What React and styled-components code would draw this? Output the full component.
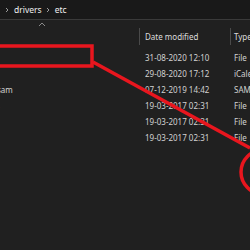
import React from 'react';
import styled, { createGlobalStyle } from "styled-components"

const Global = createGlobalStyle`
    html, body {
        margin: 0;
        padding: 0;
        background: #202020;
    }
    body {
        font-family: "Noto Sans", "Liberation Sans", sans-serif;
    }
`;

const Window = styled.div`
    position: relative;
    width: 250px;
    height: 250px;
    overflow: hidden;
    background: #202020;
`;

const AddressBar = styled.div`
    display: flex;
    align-items: center;
    height: 20px;
    background: #191919;
    border-bottom: 1px solid #3a3a3a;
    box-sizing: border-box;
    padding-left: 1px;
    color: #f0f0f0;
    font-size: 8.5px;
`;

const Crumb = styled.span`
    line-height: 20px;
`;

const Chevron = styled.svg`
    width: 8px;
    height: 8px;
    margin: 0 3px 0 2px;
`;

const SortRow = styled.div`
    height: 8px;
    padding-left: 38px;
    display: flex;
    align-items: center;
`;

const Table = styled.div`
    margin-left: -100px;
`;

const Header = styled.div`
    display: grid;
    grid-template-columns: 239px 91px 40px;
    height: 17px;
    align-items: center;
    color: #dcdcdc;
    font-size: 8px;
`;

const HeadCell = styled.div`
    height: 17px;
    line-height: 17px;
    box-sizing: border-box;
    padding-left: ${props => props.pad || 5}px;
    border-left: ${props => props.divider ? '1px solid #4a4a4a' : 'none'};
`;

const Row = styled.div`
    display: grid;
    grid-template-columns: 245px 89px 40px;
    height: 16px;
    align-items: center;
    color: #d2d2d2;
    font-size: 8px;
    white-space: nowrap;
`;

const Cell = styled.div`
    overflow: hidden;
    padding-left: ${props => props.indent || 0}px;
`;

const Rows = styled.div`
    padding-top: 4px;
`;

const Overlay = styled.svg`
    position: absolute;
    left: 0;
    top: 0;
    pointer-events: none;
`;

const files = [
    { name: 'hosts', date: '31-08-2020 12:10', type: 'File' },
    { name: 'hosts.ics', date: '29-08-2020 17:12', type: 'iCalendar' },
    { name: 'lmhosts.sam', date: '07-12-2019 14:42', type: 'SAM File' },
    { name: 'networks', date: '19-03-2017 02:31', type: 'File' },
    { name: 'protocol', date: '19-03-2017 02:31', type: 'File' },
    { name: 'services', date: '19-03-2017 02:31', type: 'File' },
];

function Arrow() {
    return (
        <Chevron viewBox="0 0 8 8">
            <path d="M3 2 L5 4 L3 6" fill="none" stroke="#9a9a9a" strokeWidth="1" />
        </Chevron>
    );
}

export default function App() {
    return (
        <Window>
            <Global />
            <AddressBar>
                <Arrow />
                <Crumb>drivers</Crumb>
                <Arrow />
                <Crumb>etc</Crumb>
            </AddressBar>
            <SortRow>
                <svg width="8" height="5" viewBox="0 0 8 5">
                    <path d="M1 4 L4 1 L7 4" fill="none" stroke="#8a8a8a" strokeWidth="1" />
                </svg>
            </SortRow>
            <Table>
                <Header>
                    <HeadCell></HeadCell>
                    <HeadCell divider>Date modified</HeadCell>
                    <HeadCell divider pad={3}>Type</HeadCell>
                </Header>
                <Rows>
                    {files.map(f => (
                        <Row key={f.name}>
                            <Cell indent={65}>{f.name}</Cell>
                            <Cell>{f.date}</Cell>
                            <Cell>{f.type}</Cell>
                        </Row>
                    ))}
                </Rows>
            </Table>
            <Overlay width="250" height="250" viewBox="0 0 250 250">
                <path d="M-10 46 L92 46 L92 66 L-10 66" fill="none" stroke="#e8161e" strokeWidth="3.5" />
                <path d="M93 62 L250 148" fill="none" stroke="#e8161e" strokeWidth="3.5" />
                <circle cx="263" cy="172" r="22" fill="none" stroke="#e8161e" strokeWidth="3.5" />
            </Overlay>
        </Window>
    );
}
